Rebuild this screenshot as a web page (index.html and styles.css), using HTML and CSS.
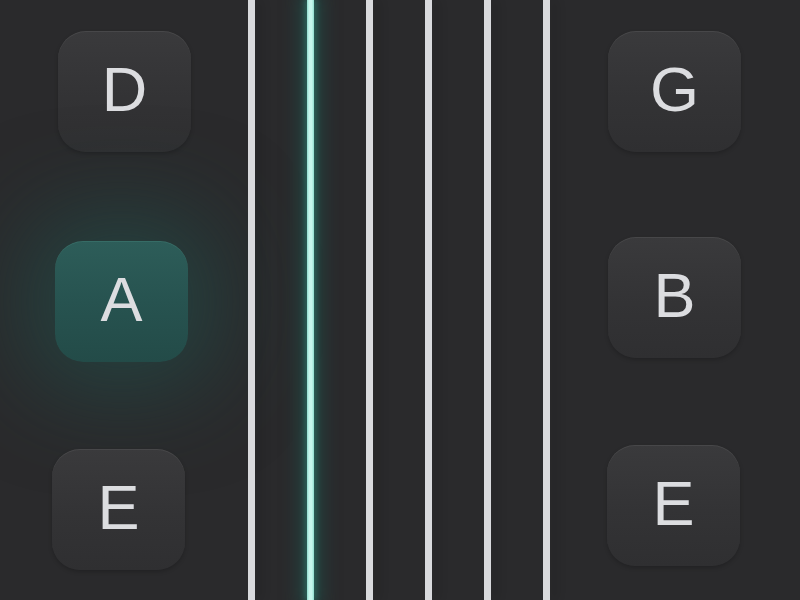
FILE: index.html
```html
<!DOCTYPE html>
<html lang="en">
<head>
<meta charset="utf-8">
<title>Tuner</title>
<link rel="stylesheet" href="styles.css">
</head>
<body>
<main class="tuner">
  <section class="pegs pegs-left">
    <button class="peg peg-d">D</button>
    <button class="peg peg-a active">A</button>
    <button class="peg peg-e1">E</button>
  </section>
  <section class="strings">
    <div class="string"></div>
    <div class="string active"></div>
    <div class="string"></div>
    <div class="string"></div>
    <div class="string"></div>
    <div class="string"></div>
  </section>
  <section class="pegs pegs-right">
    <button class="peg peg-g">G</button>
    <button class="peg peg-b">B</button>
    <button class="peg peg-e2">E</button>
  </section>
</main>
</body>
</html>
```
FILE: styles.css
```css
html, body {
  margin: 0;
  padding: 0;
  width: 800px;
  height: 600px;
  overflow: hidden;
  background: #2a2a2c;
}

.tuner {
  display: grid;
  grid-template-columns: 248px 302px 250px;
  height: 600px;
}

.pegs {
  display: flex;
  flex-direction: column;
  align-items: flex-start;
}

.peg {
  width: 133px;
  height: 121px;
  padding: 0 0 4px 0;
  border: none;
  border-radius: 28px;
  background: linear-gradient(180deg, #3a3a3c 0%, #333335 55%, #2f2f31 100%);
  box-shadow: inset 0 1px 0 rgba(255, 255, 255, 0.07), 0 2px 4px rgba(0, 0, 0, 0.2);
  color: #dcdde0;
  font-family: "Liberation Sans", Arial, sans-serif;
  font-size: 63px;
  line-height: 1;
  display: flex;
  align-items: center;
  justify-content: center;
}

.peg.active {
  background: linear-gradient(180deg, #2d5d59 0%, #275350 50%, #234b48 100%);
  box-shadow: inset 0 1px 0 rgba(120, 220, 200, 0.12), 0 0 90px 30px rgba(32, 88, 82, 0.5);
}

.peg-d { margin: 31px 0 0 58px; }
.peg-a { margin: 89px 0 0 55px; }
.peg-e1 { margin: 87px 0 0 52px; }

.peg-g { margin: 31px 0 0 58px; }
.peg-b { margin: 85px 0 0 58px; }
.peg-e2 { margin: 87px 0 0 57px; }

.strings {
  display: flex;
  justify-content: space-between;
  height: 600px;
}

.string {
  width: 7px;
  height: 100%;
  background: #d9dadd;
  box-shadow: 8px 0 8px rgba(0, 0, 0, 0.1);
}

.string.active {
  width: 7px;
  background: linear-gradient(90deg, #8edccd 0%, #c4f6ec 30%, #c4f6ec 70%, #8edccd 100%);
  box-shadow: 0 0 6px 2px rgba(60, 170, 150, 0.4), 0 0 18px 8px rgba(30, 90, 82, 0.55);
}
```
